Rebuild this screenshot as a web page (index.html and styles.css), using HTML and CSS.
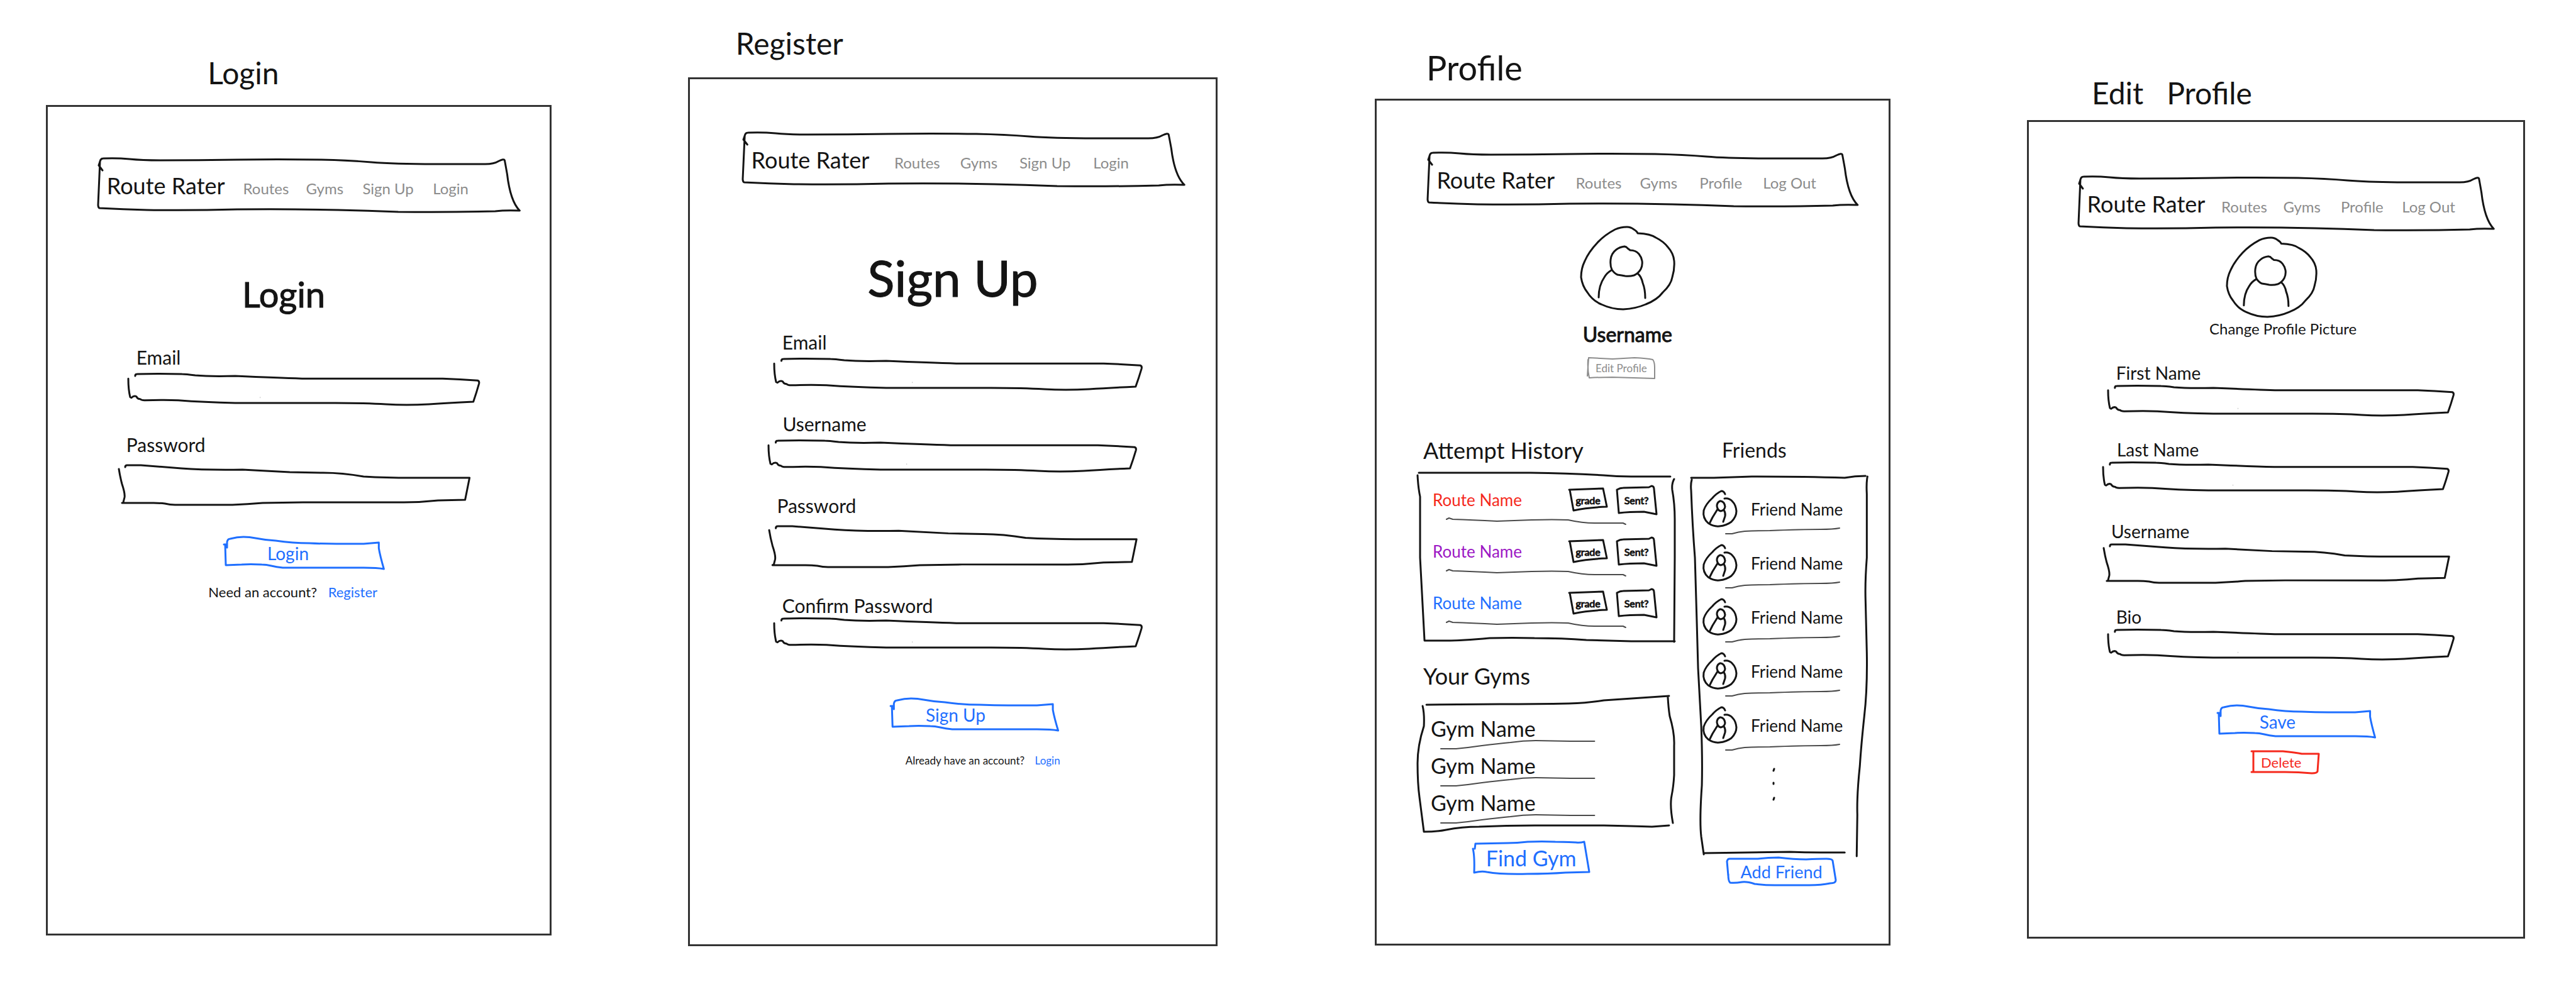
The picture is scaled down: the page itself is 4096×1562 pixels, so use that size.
FILE: index.html
```html
<!DOCTYPE html>
<html lang="en">
<head>
<meta charset="utf-8">
<meta name="viewport" content="width=device-width, initial-scale=1">
<title>Route Rater wireframes</title>
<link rel="stylesheet" href="styles.css">
</head>
<body>
<svg class="defs" aria-hidden="true">
  <symbol id="nav-box" viewBox="0 0 673 86" preserveAspectRatio="none"><path d="M7 19L1 11L3 5Q4 0 8 0Q30 -1 50 1T99 3Q160 3 222 2T356 2Q400 3 436 6T538 9H618Q632 9 640 4Q648 0 649 3Q650 8 653 25Q658 68 673 83Q650 82 634 84Q560 86 479 85Q430 83 383 82Q300 80 222 81Q150 83 78 82Q40 81 2 79Q0 78 0 74L3 5"/></symbol>
  <symbol id="field-thin" viewBox="0 0 562 49" preserveAspectRatio="none"><path d="M0 8Q0 25 3 37L5 38Q9 34 13 36Q15 40 19 40Q21 42 26 42Q60 41 80 42Q120 45 171 46H331Q380 46 412 48T481 48Q510 46 552 44Q557 30 561 16Q562 12 559 11Q530 9 503 8H278Q240 7 171 4Q130 5 107 3Q92 1 86 1Q45 0 14 1Q11 1 11 4"/><path class="speck" d="M211 37v1"/></symbol>
  <symbol id="field-thick" viewBox="0 0 557 64" preserveAspectRatio="none"><path d="M1 7Q3 20 6 31Q11 46 10 52L8 60L6 61H56Q66 61 74 62Q82 64 90 64H181Q205 63 229 61L293 60H453Q480 60 507 57L550 56L557 21H464Q425 21 389 19Q355 13 325 13L272 12L197 8Q140 9 100 6L36 1H14Q11 1 11 4"/></symbol>
  <symbol id="button-wide" viewBox="0 0 254 52" preserveAspectRatio="none"><path d="M1 12h5M6 17V8Q7 3 11 3Q22 0 32 0Q42 0 51 2Q66 5 83 6Q110 10 136 10Q158 11 179 11H222L246 9V18Q248 30 254 51Q244 49 222 49H94Q84 48 76 46Q68 44 61 44Q42 43 29 44L4 45L3 12"/></symbol>
  <symbol id="button-edit" viewBox="0 0 108 34" preserveAspectRatio="none"><path d="M0 30L2 1L40 3L75 1Q95 2 104 4Q107 8 107 16V34L40 32Q20 32 3 33Q0 20 1 4"/></symbol>
  <symbol id="button-find" viewBox="0 0 185 53" preserveAspectRatio="none"><path d="M0 12Q3 24 2 50Q14 47 22 49Q44 53 87 52Q120 52 147 50L185 49L177 1Q170 3 164 2Q140 1 131 1Q110 0 87 1Q70 3 55 3L4 4L3 12"/></symbol>
  <symbol id="button-add" viewBox="0 0 173 45" preserveAspectRatio="none"><path d="M2 29L0 6Q1 2 4 2H49Q66 0 82 0Q106 3 126 3Q145 2 158 2Q167 2 168 5L173 36Q173 41 164 41Q150 44 131 44H76Q60 44 44 42Q32 38 24 39Q12 41 5 40Q2 38 2 26"/></symbol>
  <symbol id="button-delete" viewBox="0 0 107 37" preserveAspectRatio="none"><path d="M0 1H50Q70 3 80 5H107L105 33Q104 36 96 36Q75 34 53 34H0M3 1V34"/></symbol>
  <symbol id="tag-grade" viewBox="0 0 60 36" preserveAspectRatio="none"><path d="M0 2L54 0L60 29Q30 30 7 35L1 2"/></symbol>
  <symbol id="tag-sent" viewBox="0 0 64 46" preserveAspectRatio="none"><path d="M4 44L1 7Q6 4 11 4L52 3L56 1Q60 1 60 6L64 46L44 42Q20 42 4 44"/></symbol>
  <symbol id="card-attempts" viewBox="0 0 407 270" preserveAspectRatio="none"><path d="M2 1H179Q240 2 294 5Q315 7 338 7H400M0 5Q1 25 4 39V136L11 268H45Q70 268 114 264Q150 263 185 264Q230 264 267 267L338 269H407M406 11Q402 18 403 28Q407 50 407 75V136L406 270"/></symbol>
  <symbol id="card-gyms" viewBox="0 0 406 218" preserveAspectRatio="none"><path d="M14 15L130 14Q190 14 239 13Q270 12 294 8L397 1M8 17Q11 30 10 49Q0 80 0 108Q0 140 3 162L10 217Q30 217 45 214Q70 209 97 209Q140 207 185 207H294Q340 208 370 209L397 207M395 2Q396 20 398 33Q406 60 405 80V127Q404 145 401 160Q398 175 403 203"/></symbol>
  <symbol id="card-friends" viewBox="0 0 281 606" preserveAspectRatio="none"><path d="M1 4H37Q70 3 97 2Q180 2 244 4Q260 1 277 1M2 7Q0 14 1 24Q3 80 7 131L10 234L12 307L17 399Q19 450 18 493Q14 550 17 575L21 603V601L157 599Q180 600 206 600H244M280 2Q278 12 279 30V131Q276 170 277 200L279 282Q280 340 275 383Q270 430 268 462Q263 510 264 540L263 606"/></symbol>
  <symbol id="person" viewBox="0 0 149 131" preserveAspectRatio="none"><path d="M74 0Q64 0 55 4Q38 13 27 25Q13 40 7 54Q1 66 1 80Q3 94 11 104Q19 117 33 123Q50 131 68 131Q88 130 104 123Q122 116 131 104Q144 92 146 80Q150 67 149 54Q148 42 139 32Q132 23 120 17Q112 11 91 10Q90 7 85 4Q80 0 74 0M70 31Q62 32 57 36Q49 42 48 52Q47 62 50 68Q54 74 59 76Q66 77 71 78Q78 79 85 77Q92 74 96 67Q99 61 98 54Q97 48 93 43Q88 37 79 37L75 34L73 32ZM49 69Q42 73 38 80Q29 93 29 112M91 74Q97 79 99 89Q103 99 103 113"/></symbol>
  <symbol id="friend" viewBox="0 0 54 57" preserveAspectRatio="none"><path d="M35 5Q33 0 29 0Q21 4 15 11Q4 21 1 31Q-1 43 8 51Q17 57 26 56Q37 55 45 49Q53 41 53 32Q52 22 47 17Q42 11 34 12M27 16Q22 18 22 24Q23 31 28 32Q34 31 35 25Q34 17 28 16M23 29L15 42L11 50M33 30Q36 35 35 40L32 49"/></symbol>
  <symbol id="rule-route" viewBox="0 0 284 10" preserveAspectRatio="none"><path d="M0 2L4 0L10 2Q40 3 80 5Q110 4 135 3Q170 2 193 3Q215 8 235 8H280L284 10"/></symbol>
  <symbol id="rule-gym" viewBox="0 0 243 14" preserveAspectRatio="none"><path d="M0 13H24Q45 11 65 8Q90 5 110 3Q130 0 150 0L205 1H243"/></symbol>
  <symbol id="rule-friend" viewBox="0 0 180 9" preserveAspectRatio="none"><path d="M0 9H10Q20 6 30 5Q50 4 70 4Q120 2 150 2Q170 2 180 0"/></symbol>
</svg>

<main class="boards">
  <section class="board board-login">
    <h2 class="board-title">Login</h2>
    <div class="screen">
      <nav class="nav" aria-label="Login screen">
        <svg class="ink"><use href="#nav-box"/></svg>
        <a class="brand" href="#">Route Rater</a><a href="#">Routes</a><a href="#">Gyms</a><a href="#">Sign Up</a><a href="#">Login</a>
      </nav>
      <h1 class="heading">Login</h1>
      <form class="form">
        <div class="field"><label for="login-email">Email</label>
          <div class="box"><svg class="ink"><use href="#field-thin"/></svg><input id="login-email" type="email"></div></div>
        <div class="field thick"><label for="login-password">Password</label>
          <div class="box"><svg class="ink"><use href="#field-thick"/></svg><input id="login-password" type="password"></div></div>
        <button class="primary" type="button"><svg class="ink"><use href="#button-wide"/></svg>Login</button>
      </form>
      <p class="note">Need an account? <a href="#">Register</a></p>
    </div>
  </section>

  <section class="board board-register">
    <h2 class="board-title">Register</h2>
    <div class="screen">
      <nav class="nav" aria-label="Register screen">
        <svg class="ink"><use href="#nav-box"/></svg>
        <a class="brand" href="#">Route Rater</a><a href="#">Routes</a><a href="#">Gyms</a><a href="#">Sign Up</a><a href="#">Login</a>
      </nav>
      <h1 class="heading">Sign Up</h1>
      <form class="form">
        <div class="field"><label for="reg-email">Email</label>
          <div class="box"><svg class="ink"><use href="#field-thin"/></svg><input id="reg-email" type="email"></div></div>
        <div class="field shifted"><label for="reg-username">Username</label>
          <div class="box"><svg class="ink"><use href="#field-thin"/></svg><input id="reg-username" type="text"></div></div>
        <div class="field thick"><label for="reg-password">Password</label>
          <div class="box"><svg class="ink"><use href="#field-thick"/></svg><input id="reg-password" type="password"></div></div>
        <div class="field close"><label for="reg-confirm">Confirm Password</label>
          <div class="box"><svg class="ink"><use href="#field-thin"/></svg><input id="reg-confirm" type="password"></div></div>
        <button class="primary" type="button"><svg class="ink"><use href="#button-wide"/></svg>Sign Up</button>
      </form>
      <p class="note">Already have an account? <a href="#">Login</a></p>
    </div>
  </section>

  <section class="board board-profile">
    <h2 class="board-title">Profile</h2>
    <div class="screen">
      <nav class="nav member" aria-label="Profile screen">
        <svg class="ink"><use href="#nav-box"/></svg>
        <a class="brand" href="#">Route Rater</a><a href="#">Routes</a><a href="#">Gyms</a><a href="#">Profile</a><a href="#">Log Out</a>
      </nav>
      <header class="identity">
        <svg class="avatar" role="img" aria-label="Profile picture"><use href="#person"/></svg>
        <h1 class="username">Username</h1>
        <button class="edit" type="button"><svg class="ink"><use href="#button-edit"/></svg>Edit Profile</button>
      </header>
      <div class="lists">
        <div class="column">
          <h3>Attempt History</h3>
          <div class="card attempts"><svg class="ink"><use href="#card-attempts"/></svg>
            <ul>
              <li><div class="route"><a class="red" href="#">Route Name</a><span class="tag grade"><svg class="ink"><use href="#tag-grade"/></svg>grade</span><span class="tag sent"><svg class="ink"><use href="#tag-sent"/></svg>Sent?</span></div><svg class="rule"><use href="#rule-route"/></svg></li>
              <li><div class="route"><a class="purple" href="#">Route Name</a><span class="tag grade"><svg class="ink"><use href="#tag-grade"/></svg>grade</span><span class="tag sent"><svg class="ink"><use href="#tag-sent"/></svg>Sent?</span></div><svg class="rule"><use href="#rule-route"/></svg></li>
              <li><div class="route"><a class="blue" href="#">Route Name</a><span class="tag grade"><svg class="ink"><use href="#tag-grade"/></svg>grade</span><span class="tag sent"><svg class="ink"><use href="#tag-sent"/></svg>Sent?</span></div><svg class="rule"><use href="#rule-route"/></svg></li>
            </ul>
          </div>
          <h3 class="gyms-title">Your Gyms</h3>
          <div class="card gyms"><svg class="ink"><use href="#card-gyms"/></svg>
            <ul>
              <li><a href="#">Gym Name</a><svg class="rule"><use href="#rule-gym"/></svg></li>
              <li><a href="#">Gym Name</a><svg class="rule"><use href="#rule-gym"/></svg></li>
              <li><a href="#">Gym Name</a><svg class="rule"><use href="#rule-gym"/></svg></li>
            </ul>
          </div>
          <button class="find" type="button"><svg class="ink"><use href="#button-find"/></svg>Find Gym</button>
        </div>
        <div class="column">
          <h3 class="friends-title">Friends</h3>
          <div class="card friends"><svg class="ink"><use href="#card-friends"/></svg>
            <ul>
              <li><a href="#"><svg class="face"><use href="#friend"/></svg>Friend Name</a><svg class="rule"><use href="#rule-friend"/></svg></li>
              <li><a href="#"><svg class="face"><use href="#friend"/></svg>Friend Name</a><svg class="rule"><use href="#rule-friend"/></svg></li>
              <li><a href="#"><svg class="face"><use href="#friend"/></svg>Friend Name</a><svg class="rule"><use href="#rule-friend"/></svg></li>
              <li><a href="#"><svg class="face"><use href="#friend"/></svg>Friend Name</a><svg class="rule"><use href="#rule-friend"/></svg></li>
              <li><a href="#"><svg class="face"><use href="#friend"/></svg>Friend Name</a><svg class="rule"><use href="#rule-friend"/></svg></li>
            </ul>
            <svg class="more" viewBox="0 0 8 56" role="img" aria-label="More friends"><path d="M5 3L4 6M4 25v2M5 49L4 52"/></svg>
          </div>
          <button class="add" type="button"><svg class="ink"><use href="#button-add"/></svg>Add Friend</button>
        </div>
      </div>
    </div>
  </section>

  <section class="board board-edit">
    <h2 class="board-title">Edit &nbsp; Profile</h2>
    <div class="screen">
      <nav class="nav member" aria-label="Edit profile screen">
        <svg class="ink"><use href="#nav-box"/></svg>
        <a class="brand" href="#">Route Rater</a><a href="#">Routes</a><a href="#">Gyms</a><a href="#">Profile</a><a href="#">Log Out</a>
      </nav>
      <header class="identity">
        <svg class="avatar" role="img" aria-label="Profile picture"><use href="#person"/></svg>
        <a class="change" href="#">Change Profile Picture</a>
      </header>
      <form class="form">
        <div class="field"><label for="edit-first">First Name</label>
          <div class="box"><svg class="ink"><use href="#field-thin"/></svg><input id="edit-first" type="text"></div></div>
        <div class="field shifted"><label for="edit-last">Last Name</label>
          <div class="box"><svg class="ink"><use href="#field-thin"/></svg><input id="edit-last" type="text"></div></div>
        <div class="field thick"><label for="edit-username">Username</label>
          <div class="box"><svg class="ink"><use href="#field-thick"/></svg><input id="edit-username" type="text"></div></div>
        <div class="field"><label for="edit-bio">Bio</label>
          <div class="box"><svg class="ink"><use href="#field-thin"/></svg><input id="edit-bio" type="text"></div></div>
        <button class="primary" type="button"><svg class="ink"><use href="#button-wide"/></svg>Save</button>
        <button class="delete" type="button"><svg class="ink"><use href="#button-delete"/></svg>Delete</button>
      </form>
    </div>
  </section>
</main>
</body>
</html>
```
FILE: styles.css
```css
* { box-sizing: border-box; }

:root {
  --ink: #141414;
  --grey: #8c8c8c;
  --blue: #1f6fff;
  --red: #f5291c;
  --purple: #9c17c4;
}

body {
  margin: 0;
  background: #fff;
  color: var(--ink);
  font-family: Lato, sans-serif;
}

h1, h2, h3, p, ul { margin: 0; padding: 0; font-weight: 400; }
ul { list-style: none; }
a { color: inherit; text-decoration: none; }

svg { display: block; overflow: visible; fill: none; stroke: currentColor; stroke-width: 3px; stroke-linecap: round; stroke-linejoin: round; }
symbol { overflow: visible; }
path { vector-effect: non-scaling-stroke; }
.speck { stroke: #bbb; stroke-width: 1px; }
.defs { position: absolute; width: 0; height: 0; }

/* Hand-drawn outline stretched behind its parent */
.ink { position: absolute; inset: 0; width: 100%; height: 100%; pointer-events: none; }

button {
  position: relative;
  display: flex;
  align-items: center;
  justify-content: center;
  padding: 0;
  border: 0;
  background: none;
  color: var(--blue);
  font-family: inherit;
  cursor: pointer;
}

.boards {
  display: grid;
  align-items: start;
  grid-template-columns: 73fr 804fr 217fr 842fr 250fr 820fr 217fr 792fr 81fr;
}
.board-login { grid-column: 2; padding-top: 88px; }
.board-register { grid-column: 4; padding-top: 41px; }
.board-profile { grid-column: 6; padding-top: 76px; }
.board-edit { grid-column: 8; padding-top: 120px; }

.board-title { padding-left: 10%; font-size: 48px; line-height: 56px; }
.board-login .board-title { padding-left: 32%; margin-bottom: 23px; }
.board-register .board-title { padding-left: 9%; margin-bottom: 26px; }
.board-profile .board-title { font-size: 54px; line-height: 64px; margin-bottom: 17px; }
.board-edit .board-title { padding-left: 13%; margin-bottom: 15px; }

.screen { border: 3px solid #333; }
.board-login .screen { padding: 82px 0 529px; }
.board-register .screen { padding: 85px 0 278px; }
.board-profile .screen { padding: 83px 0 92px; }
.board-edit .screen { padding: 87px 0 259px; }

.nav {
  position: relative;
  display: grid;
  grid-template-columns: 217fr 100fr 90fr 112fr 138fr;
  align-items: baseline;
  height: 86px;
  margin: 0 6% 0 10%;
  padding: 21px 0 0 14px;
  white-space: nowrap;
}
.nav.member { grid-template-columns: 217fr 100fr 93fr 99fr 148fr; }
.nav a { color: var(--grey); font-size: 24px; line-height: 44px; }
.nav .brand { color: var(--ink); font-size: 36px; }

.heading { text-align: center; -webkit-text-stroke: 1px; }
.board-login .heading { margin: 94px 6% 46px 0; font-size: 56px; line-height: 72px; }
.board-register .heading { margin: 96px 0 37px; font-size: 80px; line-height: 96px; }

.form { display: flex; flex-direction: column; align-items: flex-start; }
.field { width: 70%; margin-left: 16%; }
.field.shifted, .field.thick { margin-left: 15%; }
.field label { display: block; padding-left: 13px; margin-bottom: 8px; font-size: 30px; line-height: 36px; }
.field.shifted label { padding-left: 22px; }
.field.thick label { margin-bottom: 14px; }
.field.close label { margin-bottom: 2px; }
.box { position: relative; height: 50px; }
.thick .box { height: 66px; }
.box input { display: block; width: 100%; height: 100%; padding: 0 24px; border: 0; background: none; font: inherit; font-size: 28px; outline: none; }
.field + .field { margin-top: 36px; }
.field + .close { margin-top: 43px; }
.board-login .field + .field { margin-top: 45px; }
.board-login .thick { margin-left: 14%; }
.board-login .thick .box { height: 64px; }

.primary { width: 32%; height: 52px; margin: 78px 0 0 38%; padding-right: 58px; font-size: 28px; }
.board-login .primary { margin: 51px 0 0 35%; padding-right: 50px; }
.board-edit .primary { margin-top: 73px; padding-right: 58px; }
.delete { width: 107px; height: 37px; margin: 20px 0 0 45%; padding-right: 12px; color: var(--red); font-size: 22px; }

.note a { color: var(--blue); margin-left: 12px; }
.board-login .note { margin: 22px 0 0 32%; font-size: 22px; line-height: 28px; }
.board-register .note { margin: 33px 0 0 41%; font-size: 17px; line-height: 28px; }

.identity { display: flex; flex-direction: column; align-items: center; padding: 32px 2% 0 0; }
.avatar { width: 149px; height: 131px; }
.username { margin-top: 20px; font-size: 32px; line-height: 40px; -webkit-text-stroke: 1px; }
.edit { width: 108px; height: 34px; margin: 16px 20px 0 0; color: var(--grey); font-size: 17px; }
.edit svg { stroke-width: 2px; }
.board-edit .identity { padding: 11px 2% 40px 0; }
.board-edit .avatar { width: 143px; height: 126px; }
.change { margin: 5px 0 0 38px; font-size: 24px; line-height: 28px; }
.board-edit .field label { margin-bottom: 4px; font-size: 28px; line-height: 32px; }
.board-edit .box { height: 48px; }
.board-edit .thick .box { height: 62px; }
.board-edit .field + .field { margin-top: 38px; }
.board-edit .field + .thick { margin-top: 46px; }

.lists { display: grid; grid-template-columns: 407fr 281fr; gap: 25px; padding: 92px 4% 0 8%; }
.column { display: flex; flex-direction: column; align-items: flex-start; }
.column h3 { padding-left: 9px; font-size: 36px; line-height: 44px; margin-bottom: 13px; }
.column .gyms-title { margin: 32px 0 9px; }
.column .friends-title { padding-left: 50px; font-size: 32px; margin-bottom: 18px; }
.card { position: relative; width: 100%; }
.rule { height: 10px; color: #4a4a4a; stroke-width: 2px; }

.attempts { height: 270px; padding: 20px 29px 0 24px; }
.attempts li { margin-bottom: 19px; }
.route { display: flex; align-items: center; gap: 15px; height: 48px; font-size: 26px; }
.route a { flex: 1; }
.red { color: var(--red); }
.purple { color: var(--purple); }
.blue { color: var(--blue); }
.tag { position: relative; display: grid; place-items: center; font-size: 16px; -webkit-text-stroke: 1px; }
.grade { width: 60px; height: 36px; }
.sent { width: 64px; height: 46px; }
.attempts .rule { width: 80%; margin: 5px 0 0 22px; }

.gyms { height: 218px; padding: 35px 0 0 21px; }
.gyms li { margin-bottom: 8px; }
.gyms a { font-size: 34px; line-height: 36px; display: block; margin-bottom: 1px; }
.gyms .rule { width: 63%; height: 14px; margin-left: 16px; }

.friends { height: 606px; padding: 25px 0 0 20px; }
.friends li { margin-bottom: 18px; }
.friends a { display: flex; align-items: center; gap: 22px; font-size: 26px; white-space: nowrap; }
.face { width: 54px; height: 57px; }
.friends .rule { width: 69%; height: 9px; margin: 2px 0 0 36px; }
.more { width: 8px; height: 56px; margin: 27px 0 0 108px; }

.find { width: 185px; height: 53px; margin: 14px 0 0 88px; font-size: 34px; }
.add { width: 173px; height: 45px; margin: 2px 0 0 58px; font-size: 27px; }
```
